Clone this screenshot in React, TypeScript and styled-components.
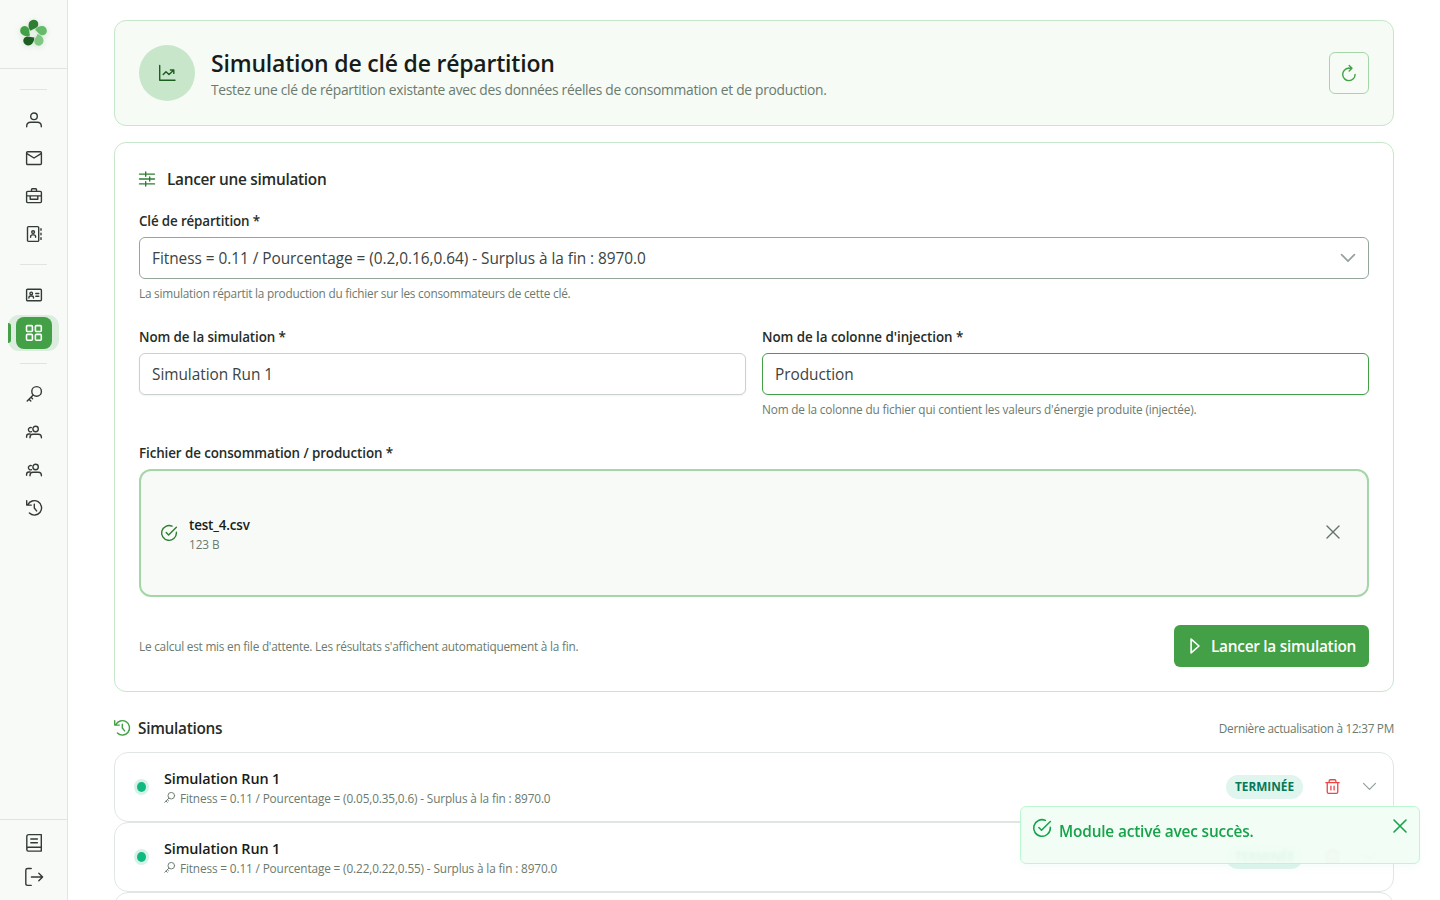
import React from "react";
import styled, { createGlobalStyle, css } from "styled-components";

const GlobalStyle = createGlobalStyle`
  *, *::before, *::after { box-sizing: border-box; }
  html, body { margin: 0; height: 100%; overflow: hidden; }
  body {
    background: #ffffff;
    color: #1f2421;
    font-family: "Open Sans", "Noto Sans", sans-serif;
    font-size: 15.4px;
  }
  button, input { font: inherit; color: inherit; }
  button { padding: 0; border: 0; background: none; cursor: pointer; }
  h1, h2, h3, p { margin: 0; }
`;

/* ---------- icons ---------- */

const Svg = styled.svg<{ $size: number }>`
  display: block;
  flex: none;
  width: ${(p) => p.$size}px;
  height: ${(p) => p.$size}px;
  fill: none;
  stroke: currentColor;
  stroke-width: 1.4;
  stroke-linecap: round;
  stroke-linejoin: round;
  overflow: visible;
`;

const glyphs = {
  user: (
    <>
      <circle cx="8" cy="4.3" r="3.3" />
      <path d="M.7 14.8v-.6c0-2.6 1.7-3.9 4.1-3.9h6.4c2.4 0 4.1 1.3 4.1 3.9v.6" />
    </>
  ),
  mail: (
    <>
      <rect x=".6" y="1.7" width="14.8" height="12.8" rx="1" />
      <path d="M.9 3.7 8 8l7.1-4.3" />
    </>
  ),
  briefcase: (
    <>
      <rect x=".6" y="3.4" width="14.8" height="11.2" rx="1" />
      <path d="M5.5 3.2V1.6c0-.5.3-.8.8-.8h3.4c.5 0 .8.3.8.8v1.6M.8 7.9h14.4M4.2 8v3.2h7.6V8" />
    </>
  ),
  addressBook: (
    <>
      <rect x="1.5" y=".6" width="11.2" height="14.8" rx="1" />
      <path d="M15 2.6v1.6M15 7.2v1.6M15 11.8v1.6" />
      <circle cx="7.1" cy="6.1" r="1.4" />
      <path d="M4.6 11.2v-.5c0-1.2.8-1.8 1.8-1.8h1.4c1 0 1.8.6 1.8 1.8v.5" />
    </>
  ),
  idCard: (
    <>
      <rect x=".6" y="2.3" width="14.8" height="11.4" rx="1" />
      <circle cx="5.2" cy="6.4" r="1.3" />
      <path d="M2.9 11v-.4c0-1 .7-1.6 1.6-1.6h1.4c.9 0 1.6.6 1.6 1.6v.4M9.8 6.5h3M9.8 9.3h3" />
    </>
  ),
  grid: (
    <>
      <rect x=".5" y=".6" width="5.9" height="5.9" rx="1" />
      <rect x="9.4" y=".6" width="5.9" height="5.9" rx="1" />
      <rect x=".5" y="9.4" width="5.9" height="5.9" rx="1" />
      <rect x="9.4" y="9.4" width="5.9" height="5.9" rx="1" />
    </>
  ),
  key: (
    <>
      <circle cx="10.6" cy="5.4" r="4.8" />
      <path d="M7.2 8.9 1.2 15M3 13.2l1.8 1.8M5 11.2l1.6 1.6" />
    </>
  ),
  users: (
    <>
      <circle cx="9.6" cy="5" r="2.7" />
      <path d="M4 13.8v-.5c0-2 1.2-3.1 3-3.1h5.4c1.8 0 3 1.1 3 3.1v.5" />
      <path d="M5.3 3.6a2.2 2.2 0 1 0 .2 4.1M.6 13.3v-1c0-1.5.9-2.3 2.3-2.3h1.3" />
    </>
  ),
  history: (
    <>
      <path d="M1.8 4.9A7.2 7.2 0 1 1 3.4 13.1M.7.6v4.5h4.6" />
      <path d="M8.3 4.1v3.9l2.3 2.9" />
    </>
  ),
  book: (
    <>
      <path d="M15.3 12.3V-.4H2.8C1.6-.4.8.4.8 1.6v13c0 .9.6 1.5 1.5 1.5h13v-3.8H2.4c-.9 0-1.6.7-1.6 1.6" />
      <path d="M4.8 4h6.6M4.8 7.8h6.6" />
    </>
  ),
  signOut: (
    <>
      <path d="M5.2-.5H1.6C.6-.5-.2.2-.2 1.2v13.4c0 1 .8 1.8 1.8 1.8h3.6" />
      <path d="M5.4 8h11.2M12.8 4.2 16.6 8l-3.8 3.8" />
    </>
  ),
  chart: (
    <>
      <path d="M.7.5v14.8H16" />
      <path d="m4.2 9.6 2.8-2.9L10 9.5l4.6-4.3M11.4 5h3.4v3.4" />
    </>
  ),
  sliders: (
    <path d="M.5 3.1h5M6.7 1v4.2M6.7 3.1h8.8M.5 8h9M10.7 5.9v4.2M10.7 8h4.8M.5 12.9h5M6.7 10.8V15M6.7 12.9h8.8" />
  ),
  refresh: (
    <>
      <path d="M7.7 3.2h-.1a6.2 6.2 0 1 0 6.5 6.2" />
      <path d="M8.2.6 11 3.2 8.2 5.9M7.4 3.2H11" />
    </>
  ),
  chevronDown: <path d="m1.6 4.7 6.4 6.4 6.4-6.4" />,
  checkCircle: (
    <>
      <path d="M15.4 7.3V8a7.4 7.4 0 1 1-4.4-6.8" />
      <path d="M15.4 2.2 7.6 10 5.2 7.6" />
    </>
  ),
  times: <path d="m2 2 12 12M14 2 2 14" />,
  play: <path d="M4.1 1.1v13.8L12 8z" />,
  trash: (
    <>
      <path d="M.9 3.9h14.2M2.4 3.9v9.9c0 .9.6 1.5 1.5 1.5h8.2c.9 0 1.5-.6 1.5-1.5V3.9M4.4 3.7V2.1C4.4 1.3 4.9.8 5.7.8h4.6c.8 0 1.3.5 1.3 1.3v1.6M6.3 7.6v4M9.7 7.6v4" />
    </>
  ),
};

type GlyphName = keyof typeof glyphs;

const Icon = ({ name, size = 16 }: { name: GlyphName; size?: number }) => (
  <Svg $size={size} viewBox="0 0 16 16" aria-hidden="true">
    {glyphs[name]}
  </Svg>
);

const LogoSvg = styled.svg`
  display: block;
  width: 33px;
  height: 33px;
  margin: 0 1px 2px 0;
  overflow: visible;
  filter: drop-shadow(0 1px 3px rgba(46, 125, 50, 0.18));
`;

const petals = ["#2e7d32", "#66bb6a", "#81c784", "#1b5e20", "#43a047"];

const Logo = () => (
  <LogoSvg viewBox="-16 -16 32 32" aria-label="Logo">
    {petals.map((color, i) => (
      <path
        key={color}
        transform={`rotate(${i * 72})`}
        fill={color}
        d="M-2.8-2.6C-4.9-5-5.4-8.4-4.1-10.8-2.8-13.3.6-14.1 2.8-12.5 5-10.9 5.2-7.9 3.3-6 1.7-4.4-1-4.2-2.8-2.6Z"
      />
    ))}
  </LogoSvg>
);

/* ---------- sidebar ---------- */

const Shell = styled.div`
  display: flex;
  height: 900px;
  overflow: hidden;
`;

const Sidebar = styled.aside`
  display: flex;
  flex-direction: column;
  flex: none;
  width: 68px;
  background: #f8faf8;
  border-right: 1px solid #e0e5e1;
  color: #343a36;
`;

const Brand = styled.div`
  display: flex;
  justify-content: center;
  align-items: center;
  height: 69px;
  border-bottom: 1px solid #e0e5e1;
`;

const Nav = styled.nav`
  display: flex;
  flex-direction: column;
  flex: 1;
  padding-top: 9px;
`;

const Divider = styled.hr`
  width: 27px;
  height: 1px;
  margin: 11px 20px;
  border: 0;
  background: #e0e5e1;
`;

const NavItem = styled.a<{ $height?: number }>`
  display: flex;
  align-items: center;
  justify-content: center;
  width: 68px;
  height: ${(p) => p.$height ?? 38}px;
`;

const ActiveHalo = styled.span`
  display: flex;
  align-items: center;
  width: 51px;
  height: 36px;
  margin-right: 1px;
  border-radius: 11px;
  background: #dcecde;
`;

const ActiveBar = styled.span`
  width: 3px;
  height: 20px;
  margin-right: 5px;
  border-radius: 0 3px 3px 0;
  background: #43a047;
`;

const ActiveTile = styled.span`
  display: flex;
  align-items: center;
  justify-content: center;
  width: 36px;
  height: 32px;
  border-radius: 8px;
  background: #43a047;
  color: #ffffff;
  svg { stroke-width: 1.6; }
`;

const SidebarFooter = styled.div`
  height: 81px;
  padding-top: 6px;
  border-top: 1px solid #e0e5e1;
`;

/* ---------- page ---------- */

const Main = styled.main`
  flex: 1;
  min-width: 0;
  padding: 20px 46px 0;
`;

const HeaderCard = styled.header`
  display: flex;
  align-items: center;
  gap: 16px;
  height: 106px;
  padding: 0 24px;
  border: 1px solid #c8e6c9;
  border-radius: 12px;
  background: #f6fbf6;
`;

const HeaderBadge = styled.span`
  display: flex;
  align-items: center;
  justify-content: center;
  width: 56px;
  height: 56px;
  border-radius: 50%;
  background: #c8e6c9;
  color: #1b5e20;
`;

const HeaderText = styled.div`
  flex: 1;
  padding-top: 3px;
`;

const PageTitle = styled.h1`
  font-size: 23px;
  font-weight: 600;
  line-height: 30px;
  letter-spacing: -0.2px;
  color: #171c18;
`;

const PageSubtitle = styled.p`
  font-size: 13.8px;
  line-height: 23px;
  letter-spacing: -0.285px;
  color: #6b7a6e;
`;

const RefreshButton = styled.button`
  display: flex;
  align-items: center;
  justify-content: center;
  width: 40px;
  height: 42px;
  border: 1px solid #a5d6a7;
  border-radius: 6px;
  color: #43a047;
`;

const FormCard = styled.section`
  height: 550px;
  margin-top: 16px;
  padding: 24px;
  border: 1px solid #c8e6c9;
  border-radius: 12px;
  background: #ffffff;
`;

const SectionTitle = styled.h2<{ $gap?: number; $tint: string }>`
  display: flex;
  align-items: center;
  gap: ${(p) => p.$gap ?? 8}px;
  font-size: 15.4px;
  font-weight: 600;
  line-height: 24px;
  letter-spacing: -0.3px;
  color: #262c28;
  svg { color: ${(p) => p.$tint}; }
`;

const SectionTitleText = styled.span`
  padding-top: 2px;
  line-height: 22px;
`;

const FieldRow = styled.div`
  display: grid;
  grid-template-columns: 1fr 1fr;
  gap: 16px;
`;

const Field = styled.div<{ $top: number }>`
  display: flex;
  flex-direction: column;
  margin-top: ${(p) => p.$top}px;
`;

const Label = styled.label<{ $track?: number }>`
  font-size: 13.4px;
  font-weight: 600;
  line-height: 20px;
  letter-spacing: ${(p) => p.$track ?? -0.1}px;
  color: #262c28;
`;

const controlBox = css`
  width: 100%;
  height: 42px;
  margin-top: 6px;
  padding: 0 12px;
  border-radius: 6px;
  background: #ffffff;
  color: #3c443f;
  font-size: 15.4px;
  letter-spacing: -0.04px;
  outline: none;
`;

const Select = styled.div`
  ${controlBox}
  display: flex;
  align-items: center;
  justify-content: space-between;
  border: 1px solid #94a698;
  svg { color: #94a39a; stroke-width: 1.7; }
`;

const Input = styled.input<{ $active?: boolean }>`
  ${controlBox}
  border: 1px solid ${(p) => (p.$active ? "#43a047" : "#c9d1cb")};
  box-shadow: 0 1px 2px rgba(18, 18, 23, 0.05);
`;

const Hint = styled.p<{ $track?: number }>`
  font-size: 11.8px;
  line-height: 18px;
  letter-spacing: ${(p) => p.$track ?? -0.22}px;
  color: #6b7a6e;
`;

const FieldHint = styled(Hint)`
  margin: 5px 0 1px;
`;

const DropZone = styled.div`
  display: flex;
  align-items: center;
  height: 128px;
  margin-top: 6px;
  padding: 0 26px 0 20px;
  border: 2px solid #a5d6a7;
  border-radius: 12px;
  background: #f8faf8;
  > svg { color: #2e7d32; }
`;

const FileInfo = styled.div`
  flex: 1;
  margin-left: 12px;
  padding-top: 1px;
`;

const FileName = styled.div`
  font-size: 13.4px;
  font-weight: 600;
  line-height: 20px;
  letter-spacing: -0.14px;
  color: #171c18;
`;

const IconButton = styled.button<{ $tint: string }>`
  display: flex;
  padding-bottom: 1px;
  color: ${(p) => p.$tint};
`;

const ClearButton = styled(IconButton)`
  padding-bottom: 2px;
`;

const FormFooter = styled.div`
  display: flex;
  align-items: center;
  justify-content: space-between;
  margin-top: 28px;
`;

const PrimaryButton = styled.button`
  display: flex;
  align-items: center;
  gap: 8px;
  height: 42px;
  width: 195px;
  padding-left: 13px;
  border-radius: 6px;
  background: #43a047;
  color: #ffffff;
  font-size: 15.4px;
  font-weight: 600;
  letter-spacing: -0.27px;
  white-space: nowrap;
  svg { stroke-width: 1.6; }
`;

/* ---------- simulations ---------- */

const ListHeader = styled.div`
  display: flex;
  align-items: center;
  justify-content: space-between;
  height: 24px;
  margin: 24px 0 12px;
`;

const SimCard = styled.article`
  display: flex;
  align-items: center;
  height: 70px;
  padding: 0 16px 0 24px;
  border: 1px solid #e0e7e3;
  border-radius: 14px;
  background: #ffffff;
`;

const StatusDot = styled.span`
  width: 9px;
  height: 10px;
  margin-right: 18px;
  margin-left: -2px;
  border-radius: 50%;
  background: #10b981;
  box-shadow: 0 0 0 3px #d6f2e8;
`;

const SimText = styled.div`
  flex: 1;
  padding-top: 1px;
`;

const SimName = styled.h3`
  font-size: 14.4px;
  font-weight: 600;
  line-height: 20px;
  letter-spacing: -0.11px;
  color: #171c18;
`;

const SimMeta = styled.p`
  display: flex;
  align-items: center;
  gap: 5px;
  font-size: 11.8px;
  line-height: 18px;
  letter-spacing: -0.14px;
  color: #6b7a6e;
  svg { margin-bottom: 1px; }
`;

const StatusPill = styled.span`
  display: flex;
  align-items: center;
  justify-content: center;
  width: 77px;
  height: 24px;
  margin-right: 22px;
  padding-bottom: 2px;
  border-radius: 12px;
  background: #e0f5ee;
  color: #047857;
  font-size: 11.8px;
  font-weight: 700;
`;

const SimActions = styled.div`
  display: flex;
  align-items: center;
  gap: 22px;
`;

/* ---------- toast ---------- */

const Toast = styled.div`
  position: fixed;
  top: 806px;
  right: 20px;
  display: flex;
  align-items: flex-start;
  width: 400px;
  height: 58px;
  padding: 12px 11px 0 12px;
  border: 1px solid #bbf7d0;
  border-radius: 6px;
  background: rgba(240, 253, 244, 0.95);
  backdrop-filter: blur(1.5px);
  box-shadow: 0 4px 8px rgba(34, 197, 94, 0.04);
  color: #16a34a;
`;

const ToastText = styled.div`
  flex: 1;
  margin: 2px 0 0 8px;
  font-size: 15.4px;
  font-weight: 600;
  line-height: 22px;
  letter-spacing: -0.17px;
`;

const ToastClose = styled(IconButton)`
  margin-top: -1px;
  svg { stroke-width: 1.6; }
`;

const navGroups: GlyphName[][] = [
  ["user", "mail", "briefcase", "addressBook"],
  ["idCard", "grid"],
  ["key", "users", "users", "history"],
];

const simulations = [
  "Fitness = 0.11 / Pourcentage = (0.05,0.35,0.6) - Surplus à la fin : 8970.0",
  "Fitness = 0.11 / Pourcentage = (0.22,0.22,0.55) - Surplus à la fin : 8970.0",
];

export default function App() {
  return (
    <>
      <GlobalStyle />
      <Shell>
        <Sidebar>
          <Brand>
            <Logo />
          </Brand>
          <Nav>
            {navGroups.map((group, g) => (
              <React.Fragment key={g}>
                <Divider />
                {group.map((name, i) => (
                  <NavItem key={i}>
                    {name === "grid" ? (
                      <ActiveHalo>
                        <ActiveBar />
                        <ActiveTile>
                          <Icon name="grid" />
                        </ActiveTile>
                      </ActiveHalo>
                    ) : (
                      <Icon name={name} />
                    )}
                  </NavItem>
                ))}
              </React.Fragment>
            ))}
          </Nav>
          <SidebarFooter>
            <NavItem $height={34}>
              <Icon name="book" />
            </NavItem>
            <NavItem $height={34}>
              <Icon name="signOut" />
            </NavItem>
          </SidebarFooter>
        </Sidebar>

        <Main>
          <HeaderCard>
            <HeaderBadge>
              <Icon name="chart" />
            </HeaderBadge>
            <HeaderText>
              <PageTitle>Simulation de clé de répartition</PageTitle>
              <PageSubtitle>
                Testez une clé de répartition existante avec des données réelles de consommation et de production.
              </PageSubtitle>
            </HeaderText>
            <RefreshButton aria-label="Actualiser">
              <Icon name="refresh" />
            </RefreshButton>
          </HeaderCard>

          <FormCard>
            <SectionTitle $gap={12} $tint="#2e7d32">
              <Icon name="sliders" />
              <SectionTitleText>Lancer une simulation</SectionTitleText>
            </SectionTitle>

            <Field $top={20}>
              <Label $track={-0.15}>Clé de répartition *</Label>
              <Select>
                Fitness = 0.11 / Pourcentage = (0.2,0.16,0.64) - Surplus à la fin : 8970.0
                <Icon name="chevronDown" />
              </Select>
              <FieldHint>
                La simulation répartit la production du fichier sur les consommateurs de cette clé.
              </FieldHint>
            </Field>

            <FieldRow>
              <Field $top={24}>
                <Label>Nom de la simulation *</Label>
                <Input defaultValue="Simulation Run 1" />
              </Field>
              <Field $top={24}>
                <Label $track={-0.05}>Nom de la colonne d'injection *</Label>
                <Input $active defaultValue="Production" />
                <FieldHint $track={-0.17}>
                  Nom de la colonne du fichier qui contient les valeurs d'énergie produite (injectée).
                </FieldHint>
              </Field>
            </FieldRow>

            <Field $top={24}>
              <Label>Fichier de consommation / production *</Label>
              <DropZone>
                <Icon name="checkCircle" />
                <FileInfo>
                  <FileName>test_4.csv</FileName>
                  <Hint $track={-0.1}>123 B</Hint>
                </FileInfo>
                <ClearButton $tint="#66736a" aria-label="Retirer le fichier">
                  <Icon name="times" />
                </ClearButton>
              </DropZone>
            </Field>

            <FormFooter>
              <Hint>
                Le calcul est mis en file d'attente. Les résultats s'affichent automatiquement à la fin.
              </Hint>
              <PrimaryButton>
                <Icon name="play" />
                Lancer la simulation
              </PrimaryButton>
            </FormFooter>
          </FormCard>

          <ListHeader>
            <SectionTitle $tint="#43a047">
              <Icon name="history" />
              <SectionTitleText>Simulations</SectionTitleText>
            </SectionTitle>
            <Hint $track={-0.29}>Dernière actualisation à 12:37 PM</Hint>
          </ListHeader>

          {simulations.map((meta) => (
            <SimCard key={meta}>
              <StatusDot />
              <SimText>
                <SimName>Simulation Run 1</SimName>
                <SimMeta>
                  <Icon name="key" size={11} />
                  {meta}
                </SimMeta>
              </SimText>
              <StatusPill>TERMINÉE</StatusPill>
              <SimActions>
                <IconButton $tint="#ef4444" aria-label="Supprimer">
                  <Icon name="trash" size={15} />
                </IconButton>
                <IconButton $tint="#94a39a" aria-label="Détails">
                  <Icon name="chevronDown" size={15} />
                </IconButton>
              </SimActions>
            </SimCard>
          ))}
          <SimCard />
        </Main>
      </Shell>

      <Toast role="status">
        <Icon name="checkCircle" size={18} />
        <ToastText>Module activé avec succès.</ToastText>
        <ToastClose $tint="#16a34a" aria-label="Fermer">
          <Icon name="times" />
        </ToastClose>
      </Toast>
    </>
  );
}
